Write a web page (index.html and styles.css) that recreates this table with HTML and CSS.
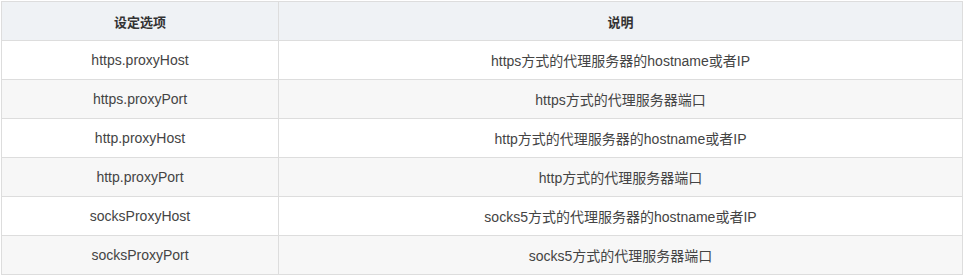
FILE: index.html
```html
<!DOCTYPE html>
<html lang="zh">
<head>
<meta charset="utf-8">
<link rel="stylesheet" href="styles.css">
</head>
<body>
<table class="opts">
  <thead>
    <tr><th class="c1">设定选项</th><th class="c2">说明</th></tr>
  </thead>
  <tbody>
    <tr><td>https.proxyHost</td><td>https方式的代理服务器的hostname或者IP</td></tr>
    <tr><td>https.proxyPort</td><td>https方式的代理服务器端口</td></tr>
    <tr><td>http.proxyHost</td><td>http方式的代理服务器的hostname或者IP</td></tr>
    <tr><td>http.proxyPort</td><td>http方式的代理服务器端口</td></tr>
    <tr><td>socksProxyHost</td><td>socks5方式的代理服务器的hostname或者IP</td></tr>
    <tr><td>socksProxyPort</td><td>socks5方式的代理服务器端口</td></tr>
  </tbody>
</table>
</body>
</html>
```
FILE: styles.css
```css
html, body {
  margin: 0;
  padding: 0;
  background: #fff;
}
body {
  padding: 1px 0 0 1px;
  font-family: "Liberation Sans", Arial, "Noto Sans CJK SC", sans-serif;
  font-size: 14px;
  color: #444;
}
.opts {
  border-collapse: collapse;
  width: 962px;
  table-layout: fixed;
}
.opts th, .opts td {
  border: 1px solid #ddd;
  height: 39px;
  padding: 0 8px;
  text-align: center;
  vertical-align: middle;
  box-sizing: border-box;
}
.opts th {
  background: #eff2f5;
  font-weight: bold;
  font-size: 13px;
  color: #333;
}
.opts .c1 { width: 277px; }
.opts tbody tr:nth-child(even) td {
  background: #f7f7f7;
}
```
